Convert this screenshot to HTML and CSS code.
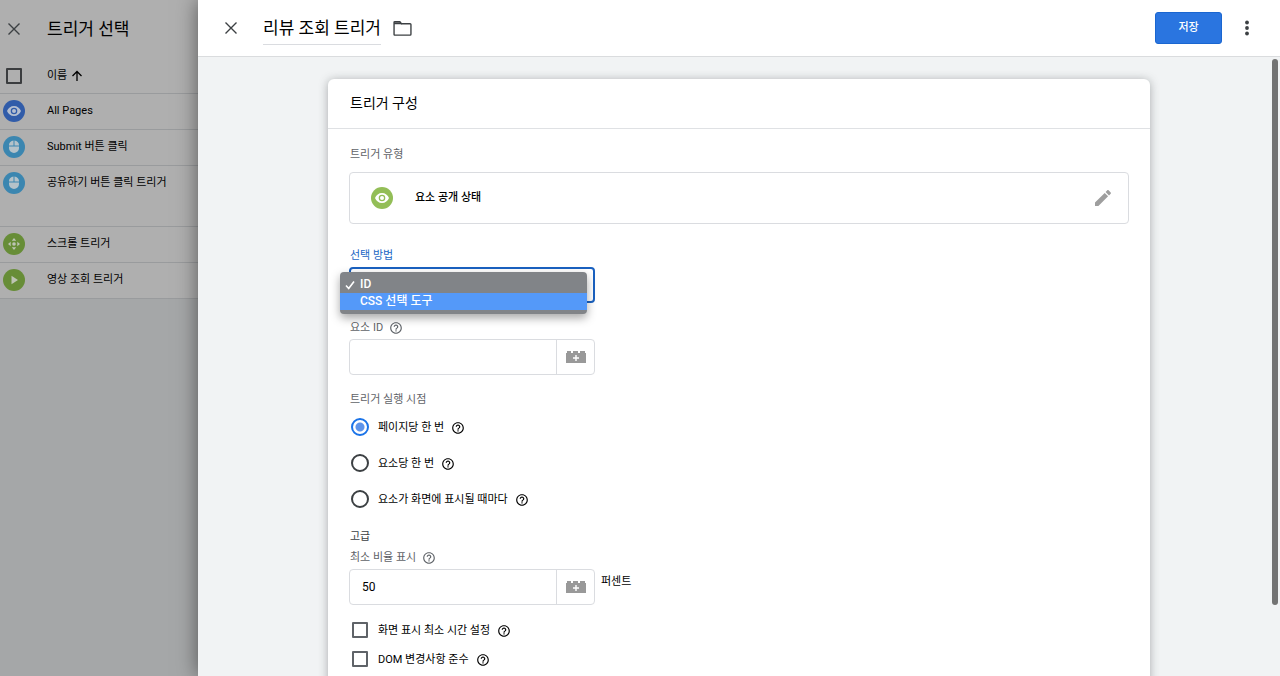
FILE: index.html
```html
<!DOCTYPE html>
<html lang="ko">
<head>
  <meta charset="UTF-8">
  <meta name="viewport" content="width=device-width, initial-scale=1.0">
  <title>리뷰 조회 트리거</title>
  <link rel="stylesheet" href="styles.css">
</head>
<body>
  <!-- Shared icons -->
  <svg class="sprite" aria-hidden="true">
    <symbol id="close" viewBox="0 0 14 14">
      <path d="M1.5 1.5l11 11M12.5 1.5l-11 11" fill="none" stroke="currentColor" stroke-width="1.4"/>
    </symbol>
    <symbol id="help" viewBox="0 0 24 24">
      <path fill="currentColor" d="M11 18h2v-2h-2v2zm1-16C6.48 2 2 6.48 2 12s4.48 10 10 10 10-4.480 10-10S17.520 2 12 2zm0 18c-4.410 0-8-3.590-8-8s3.590-8 8-8 8 3.590 8 8-3.590 8-8 8zm0-14c-2.210 0-4 1.790-4 4h2c0-1.100.9-2 2-2s2 .9 2 2c0 2-3 1.750-3 5h2c0-2.250 3-2.500 3-5 0-2.210-1.790-4-4-4z"/>
    </symbol>
    <symbol id="eye" viewBox="0 0 22 22">
      <path fill="currentColor" fill-rule="evenodd" d="M11 6C7.800 6 5.100 8.100 4 11c1.100 2.900 3.800 5 7 5s5.900-2.100 7-5c-1.100-2.900-3.800-5-7-5zm0 8.300a3.300 3.300 0 1 1 0-6.600 3.300 3.300 0 0 1 0 6.600z"/>
      <circle cx="11" cy="11" r="2" fill="currentColor"/>
    </symbol>
    <symbol id="mouse" viewBox="0 0 22 22">
      <path fill="currentColor" d="M10.500 4.500v5H6V9c0-2.500 2-4.300 4.500-4.500zM11.500 4.500v5H16V9c0-2.500-2-4.300-4.500-4.500zM6 10.500h10V12a5 5 0 0 1-10 0z"/>
    </symbol>
    <symbol id="brick" viewBox="0 0 22 14">
      <path fill="#999" d="M1 3h1V1h4v2h2V1h5v2h2V1h5v2h1v10H1z"/>
      <path d="M11 5v6M8 8h6" stroke="#fff" stroke-width="1.400"/>
    </symbol>
  </svg>

  <div class="page">
    <!-- Trigger list behind the editor -->
    <aside class="sidebar">
      <header class="sidebar-header">
        <button class="icon-button" aria-label="닫기"><svg class="icon-close"><use href="#close"/></svg></button>
        <h2>트리거 선택</h2>
      </header>
      <div class="list-head">
        <input type="checkbox" class="checkbox" aria-label="모두 선택">
        <button class="sort">이름
          <svg class="icon-arrow" viewBox="0 0 12 12"><path d="M6 11V2M1.500 6L6 1.500 10.500 6" fill="none" stroke="currentColor" stroke-width="1.300"/></svg>
        </button>
      </div>
      <ul class="trigger-list">
        <li><span class="badge blue"><svg><use href="#eye"/></svg></span><span>All Pages</span></li>
        <li><span class="badge sky"><svg><use href="#mouse"/></svg></span><span>Submit 버튼 클릭</span></li>
        <li class="tall"><span class="badge sky"><svg><use href="#mouse"/></svg></span><span>공유하기 버튼 클릭 트리거</span></li>
        <li>
          <span class="badge green"><svg viewBox="0 0 22 22"><circle cx="11" cy="11" r="1.800" fill="currentColor"/><path fill="currentColor" d="M11 5l2.200 2.700H8.800zM11 17l-2.200-2.700h4.400zM5 11l2.700-2.200v4.400zM17 11l-2.700 2.200V8.800z"/></svg></span>
          <span>스크롤 트리거</span>
        </li>
        <li>
          <span class="badge green"><svg viewBox="0 0 22 22"><path fill="currentColor" d="M8.500 6.800v8.400l6.500-4.200z"/></svg></span>
          <span>영상 조회 트리거</span>
        </li>
      </ul>
    </aside>

    <!-- Trigger editor -->
    <main class="editor">
      <header class="editor-header">
        <button class="icon-button" aria-label="닫기"><svg class="icon-close"><use href="#close"/></svg></button>
        <h1>리뷰 조회 트리거</h1>
        <button class="icon-button" aria-label="폴더">
          <svg class="icon-folder" viewBox="0 0 18 16"><path d="M1.800 1.500h4.700l1.500 2h8.200q.8 0 .8.800v9.200q0 .8-.8.800H1.800q-.8 0-.8-.8V2.300q0-.8.8-.8z" fill="none" stroke="currentColor" stroke-width="1.300"/><path d="M1 2h6l1.500 2H1z" fill="currentColor"/></svg>
        </button>
        <button class="save">저장</button>
        <button class="icon-button" aria-label="더보기">
          <svg class="icon-more" viewBox="0 0 4 16"><circle cx="2" cy="2.500" r="1.900"/><circle cx="2" cy="8" r="1.900"/><circle cx="2" cy="13.500" r="1.900"/></svg>
        </button>
      </header>

      <div class="content">
        <section class="card">
          <h3>트리거 구성</h3>
          <form class="card-body">
            <div class="label">트리거 유형</div>
            <div class="type-box">
              <span class="badge lime"><svg><use href="#eye"/></svg></span>
              <span class="type-name">요소 공개 상태</span>
              <button type="button" class="icon-button pencil" aria-label="수정">
                <svg class="icon-pencil" viewBox="0 0 18 18"><path fill="currentColor" d="M1 13.600V17h3.400l9.700-9.700-3.400-3.400zM16.700 4.700c.4-.4.4-1 0-1.300l-2.100-2.100c-.4-.4-1-.4-1.300 0l-1.700 1.700L15 6.400z"/></svg>
              </button>
            </div>

            <label class="label active" for="method">선택 방법</label>
            <div class="select-wrap">
              <select id="method">
                <option selected>ID</option>
                <option>CSS 선택 도구</option>
              </select>
              <!-- Open menu of the select -->
              <ul class="menu">
                <li><svg class="icon-check" viewBox="0 0 10 10"><path d="M1 5.500L3.700 8.500 9 1.500" fill="none" stroke="currentColor" stroke-width="1.600"/></svg>ID</li>
                <li class="highlight">CSS 선택 도구</li>
              </ul>
            </div>

            <div class="label-row">
              <label class="label" for="elementId">요소 ID</label>
              <button type="button" class="help" aria-label="도움말"><svg><use href="#help"/></svg></button>
            </div>
            <div class="field">
              <input type="text" id="elementId">
              <button type="button" aria-label="변수 삽입"><svg><use href="#brick"/></svg></button>
            </div>

            <div class="label">트리거 실행 시점</div>
            <div class="option">
              <input type="radio" name="fire" id="perPage" checked>
              <label for="perPage">페이지당 한 번</label>
              <button type="button" class="help" aria-label="도움말"><svg><use href="#help"/></svg></button>
            </div>
            <div class="option">
              <input type="radio" name="fire" id="perElement">
              <label for="perElement">요소당 한 번</label>
              <button type="button" class="help" aria-label="도움말"><svg><use href="#help"/></svg></button>
            </div>
            <div class="option">
              <input type="radio" name="fire" id="everyTime">
              <label for="everyTime">요소가 화면에 표시될 때마다</label>
              <button type="button" class="help" aria-label="도움말"><svg><use href="#help"/></svg></button>
            </div>

            <h4>고급</h4>
            <div class="label-row">
              <label class="label" for="percent">최소 비율 표시</label>
              <button type="button" class="help" aria-label="도움말"><svg><use href="#help"/></svg></button>
            </div>
            <div class="percent-row">
              <div class="field">
                <input type="text" id="percent" value="50">
                <button type="button" aria-label="변수 삽입"><svg><use href="#brick"/></svg></button>
              </div>
              <span class="unit">퍼센트</span>
            </div>

            <div class="option check">
              <input type="checkbox" class="checkbox" id="minTime">
              <label for="minTime">화면 표시 최소 시간 설정</label>
              <button type="button" class="help" aria-label="도움말"><svg><use href="#help"/></svg></button>
            </div>
            <div class="option check">
              <input type="checkbox" class="checkbox" id="dom">
              <label for="dom">DOM 변경사항 준수</label>
              <button type="button" class="help" aria-label="도움말"><svg><use href="#help"/></svg></button>
            </div>
          </form>
        </section>
        <div class="scroll-thumb"></div>
      </div>
    </main>
  </div>
</body>
</html>
```

FILE: styles.css
```css
* {
  box-sizing: border-box;
}
body {
  margin: 0;
  font-family: Roboto, "Noto Sans CJK KR", sans-serif;
  font-size: 11px;
  line-height: 18px;
  color: #000;
}
h1, h2, h3, h4, ul {
  margin: 0;
  padding: 0;
  font-weight: 400;
  list-style: none;
}
button {
  padding: 0;
  border: 0;
  background: none;
  color: inherit;
  font: inherit;
}
svg {
  display: block;
}
.sprite {
  display: none;
}
.page {
  display: flex;
  height: 100vh;
  overflow: hidden;
}
.icon-button {
  display: flex;
  color: #3c4043;
}
.icon-close {
  width: 14px;
  height: 14px;
}
.checkbox {
  appearance: none;
  width: 16px;
  height: 16px;
  margin: 0;
  border: 2px solid #5f6368;
  border-radius: 1px;
}

/* trigger list */
.sidebar {
  flex: none;
  width: 198px;
  background-color: #a5a7a8;
}
.sidebar-header {
  display: flex;
  align-items: center;
  gap: 26px;
  height: 58px;
  padding-left: 7px;
  background-color: #afafaf;
}
.sidebar-header h2 {
  font-size: 17px;
  line-height: 24px;
}
.list-head {
  display: flex;
  align-items: center;
  gap: 25px;
  height: 36px;
  padding-left: 6px;
  border-bottom: 1px solid #999b9d;
  background-color: #afafaf;
}
.list-head .checkbox {
  border-color: #3b3d3f;
}
.sort {
  display: flex;
  align-items: center;
  gap: 4px;
}
.icon-arrow {
  width: 12px;
  height: 12px;
}
.trigger-list li {
  display: flex;
  gap: 22px;
  padding: 6px 0 7px 3px;
  border-bottom: 1px solid #999b9d;
  background-color: #afafaf;
  line-height: 22px;
}
.trigger-list .tall {
  min-height: 61px;
}
.badge {
  flex: none;
  width: 22px;
  height: 22px;
  border-radius: 50%;
}
.badge svg {
  width: 22px;
  height: 22px;
}
.blue {
  background-color: #315ca9;
  color: #b5bfd0;
}
.sky {
  background-color: #3b86b0;
  color: #b5c2c9;
}
.green {
  background-color: #678d37;
  color: #bdc4b4;
}
.lime {
  background-color: #93be57;
  color: #fff;
}

/* editor panel */
.editor {
  position: relative;
  flex: 1;
  display: flex;
  flex-direction: column;
  min-width: 0;
  background-color: #f1f3f4;
  box-shadow: 0 0 20px rgba(0, 0, 0, 0.5);
}
.editor-header {
  flex: none;
  display: flex;
  align-items: center;
  height: 57px;
  padding: 0 31px 0 26px;
  border-bottom: 1px solid #dadcde;
  background-color: #fff;
}
.editor-header h1 {
  margin: 0 12px 0 25px;
  padding: 4px 0 3px;
  border-bottom: 1px solid #dadce0;
  font-size: 17px;
  line-height: 26px;
}
.icon-folder {
  width: 19px;
  height: 17px;
}
.save {
  width: 67px;
  height: 32px;
  margin: 0 23px 0 auto;
  border: 1px solid #1a66d0;
  border-radius: 3px;
  background-color: #2a75e0;
  color: #fff;
  font-weight: 500;
}
.icon-more {
  width: 4px;
  height: 16px;
  fill: #3c4043;
}
.content {
  position: relative;
  flex: 1;
  min-height: 0;
  padding: 22px 130px;
  overflow: hidden;
}
.scroll-thumb {
  position: absolute;
  top: 2px;
  right: 2px;
  width: 6px;
  height: 546px;
  border-radius: 3px;
  background-color: #737373;
}
.card {
  border-radius: 6px;
  background-color: #fff;
  box-shadow: 0 1px 10px rgba(60, 64, 67, 0.4);
}
.card h3 {
  padding: 12px 22px 13px;
  border-bottom: 1px solid #dfe1e4;
  font-size: 14px;
  line-height: 24px;
}
.card-body {
  padding: 17px 21px 40px;
}
.label {
  display: block;
  padding-left: 1px;
  color: #5f6368;
}
.active {
  color: #1a66c4;
}
.type-box {
  display: flex;
  align-items: center;
  gap: 22px;
  height: 52px;
  margin: 8px 0 23px;
  padding: 0 16px 0 21px;
  border: 1px solid #dadce0;
  border-radius: 4px;
}
.type-name {
  font-weight: 500;
}
.pencil {
  margin-left: auto;
  color: #9e9e9e;
}
.icon-pencil {
  width: 18px;
  height: 18px;
}
.select-wrap {
  position: relative;
  width: 246px;
  margin: 2px 0 16px;
}
.select-wrap select {
  display: block;
  appearance: none;
  width: 100%;
  height: 36px;
  padding: 0 12px;
  border: 2px solid #1a61c0;
  border-radius: 4px;
  background-color: #fff;
  font: inherit;
}
.menu {
  position: absolute;
  top: 5px;
  left: -9px;
  width: 247px;
  padding: 4px 0;
  border-radius: 4px;
  background-color: #818488;
  color: #fff;
  box-shadow: 0 4px 10px rgba(0, 0, 0, 0.35);
  font-size: 12px;
  font-weight: 500;
  line-height: 17px;
}
.menu li {
  display: flex;
  align-items: center;
  gap: 5px;
  padding-left: 5px;
}
.menu .highlight {
  padding-left: 20px;
  background-color: #5499f9;
}
.icon-check {
  width: 10px;
  height: 10px;
}
.label-row {
  display: flex;
  align-items: center;
  gap: 6px;
  margin-bottom: 2px;
  color: #5f6368;
}
.help svg {
  width: 14px;
  height: 14px;
}
.field {
  display: flex;
  width: 246px;
  height: 36px;
  margin-bottom: 16px;
  border: 1px solid #dadce0;
  border-radius: 4px;
}
.field input {
  flex: 1;
  min-width: 0;
  padding: 0 12px;
  border: 0;
  background: none;
  font: inherit;
  font-size: 12px;
}
.field button {
  display: flex;
  align-items: center;
  justify-content: center;
  width: 38px;
  border-left: 1px solid #dadce0;
}
.field svg {
  width: 22px;
  height: 14px;
}
.option {
  display: flex;
  align-items: center;
  height: 36px;
  padding-left: 2px;
}
.option label {
  margin: 0 7px 0 9px;
  padding-top: 2px;
}
.option .help {
  padding-top: 2px;
}
.option input[type="radio"] {
  appearance: none;
  width: 18px;
  height: 18px;
  margin: 0;
  border: 2px solid #3c4043;
  border-radius: 50%;
}
.option input[type="radio"]:checked {
  border-color: #1a73e8;
  background: radial-gradient(circle, #5e94ea 4px, #fff 5px);
}
.card h4 {
  margin: 11px 0 3px;
  padding-left: 1px;
  color: #3c4043;
}
.percent-row {
  display: flex;
  gap: 6px;
}
.percent-row .field {
  margin-bottom: 10px;
}
.unit {
  padding-top: 4px;
}
.option.check {
  height: 29px;
  padding-left: 3px;
}
.check label {
  margin-left: 10px;
}
```
